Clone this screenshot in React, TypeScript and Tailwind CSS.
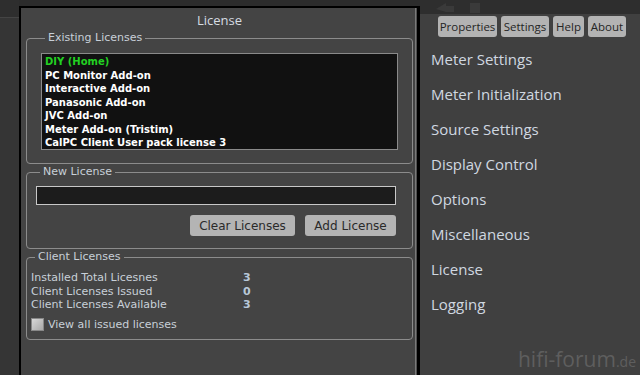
import React from "react";

const lic = [
  "DIY (Home)",
  "PC Monitor Add-on",
  "Interactive Add-on",
  "Panasonic Add-on",
  "JVC Add-on",
  "Meter Add-on (Tristim)",
  "CalPC Client User pack license 3",
];

const menu = [
  "Meter Settings",
  "Meter Initialization",
  "Source Settings",
  "Display Control",
  "Options",
  "Miscellaneous",
  "License",
  "Logging",
];

const tahoma = { fontFamily: "'DejaVu Sans', Verdana, sans-serif" };
const segoe = { fontFamily: "'Open Sans', 'Noto Sans', sans-serif" };

function Group({ label, className, children }: { label: string; className?: string; children: React.ReactNode }) {
  return (
    <fieldset className={"border border-[#8c8c8c] rounded-[4px] " + (className ?? "")}>
      <legend className="ml-[4px] px-[3px] text-[11px] leading-[14px] text-[#c8d0d8]" style={tahoma}>
        {label}
      </legend>
      {children}
    </fieldset>
  );
}

export default function App() {
  return (
    <div className="w-[640px] h-[375px] flex overflow-hidden bg-[#404040]">
      {/* left strip */}
      <div className="w-[19px] flex flex-col bg-[#353535]">
        <div className="h-[17px] bg-[#2e2e2e]" />
        <div className="h-px bg-[#444]" />
      </div>

      {/* dialog column */}
      <div className="w-[401px] flex flex-col bg-[#2c2c2c]">
        <div className="h-[6px]" />
        <div className="flex-1 flex border-t-2 border-l-2 border-black">
          <div className="flex-1 flex flex-col bg-[#444444] pl-[5px] pr-[2px]">
            <div className="h-[23px] pt-[2px] flex items-center justify-center text-[13px] text-[#d6dce2]" style={segoe}>
              License
            </div>
            <Group label="Existing Licenses" className="h-[133px] px-[14px] pt-[8px]">
              <div className="h-[97px] border border-[#8a8a8a] bg-[#111] pt-[1px] pl-[3px]">
                {lic.map((t, i) => (
                  <div
                    key={t}
                    className={"text-[10px] font-bold leading-[13.5px] whitespace-nowrap " + (i === 0 ? "text-[#22d022]" : "text-white")}
                    style={tahoma}
                  >
                    {t}
                  </div>
                ))}
              </div>
            </Group>
            <Group label="New License" className="mt-[1px] h-[84px] pl-[9px] pr-[16px] pt-[7px]">
              <div className="h-[19px] border border-[#c8c8c8] bg-[#1c1c1c]" />
              <div className="mt-[10px] flex justify-end gap-[10px]">
                <button className="w-[105px] h-[21px] rounded-[3px] bg-[#b4b4b4] text-[12px] text-[#2a2a2a]" style={tahoma}>
                  Clear Licenses
                </button>
                <button className="w-[91px] h-[21px] rounded-[3px] bg-[#b4b4b4] text-[12px] text-[#2a2a2a]" style={tahoma}>
                  Add License
                </button>
              </div>
            </Group>
            <Group label="Client Licenses" className="mt-[1px] h-[90px] pl-[4px] pt-[7px]">
              {[
                ["Installed Total Licesnes", "3"],
                ["Client Licenses Issued", "0"],
                ["Client Licenses Available", "3"],
              ].map(([a, b]) => (
                <div key={a} className="flex text-[11px] leading-[13.5px] text-[#c8d0d8]" style={tahoma}>
                  <span className="w-[212px]">{a}</span>
                  <span className="font-bold text-[#b8c8d8]">{b}</span>
                </div>
              ))}
              <div className="mt-[5px] flex items-center gap-[4px]">
                <div className="w-[13px] h-[13px] border border-[#888] bg-gradient-to-br from-[#d8d8d8] to-[#a8a8a8]" />
                <span className="text-[11px] text-[#c8d0d8]" style={tahoma}>
                  View all issued licenses
                </span>
              </div>
            </Group>
          </div>
          <div className="w-px bg-[#7a7a7a]" />
          <div className="w-[1px] bg-[#505050]" />
          <div className="w-[3px] bg-black" />
        </div>
      </div>

      {/* right panel */}
      <div className="flex-1 flex flex-col bg-[#404040] relative">
        <div className="h-[14px] bg-[#2e2e2e] flex items-center pl-[14px] gap-[10px]">
          <svg width="22" height="12" viewBox="0 0 22 12">
            <path d="M2 8 L12 2 L12 5 L20 5 L20 11 L12 11 Z" fill="#3a3a3a" />
          </svg>
          <svg width="18" height="12" viewBox="0 0 18 12">
            <path d="M4 2 L14 2 L14 12 L4 12 Z" fill="#3a3a3a" />
          </svg>
        </div>
        <div className="flex gap-[4px] pl-[18px] pt-[2px]" style={segoe}>
          {[
            ["Properties", "w-[59px]"],
            ["Settings", "w-[48px]"],
            ["Help", "w-[31px]"],
            ["About", "w-[38px]"],
          ].map(([t, w]) => (
            <div key={t} className={w + " h-[21px] rounded-[3px] bg-[#b3b3b3] text-[11.5px] text-[#252525] flex items-center justify-center"}>
              {t}
            </div>
          ))}
        </div>
        <div className="pl-[11px] pt-[5px] flex flex-col" style={segoe}>
          {menu.map((m) => (
            <div key={m} className="h-[35px] flex items-center text-[15px] text-[#d0d8e0]">
              {m}
            </div>
          ))}
        </div>
        <div className="absolute right-[4px] bottom-[3px] text-[#5e5e5e] flex items-baseline whitespace-nowrap" style={{ fontFamily: "'Open Sans', sans-serif" }}>
          <span className="text-[21px] leading-[26px]">hifi-forum</span>
          <span className="text-[14px] leading-[18px]">.de</span>
        </div>
      </div>
    </div>
  );
}
